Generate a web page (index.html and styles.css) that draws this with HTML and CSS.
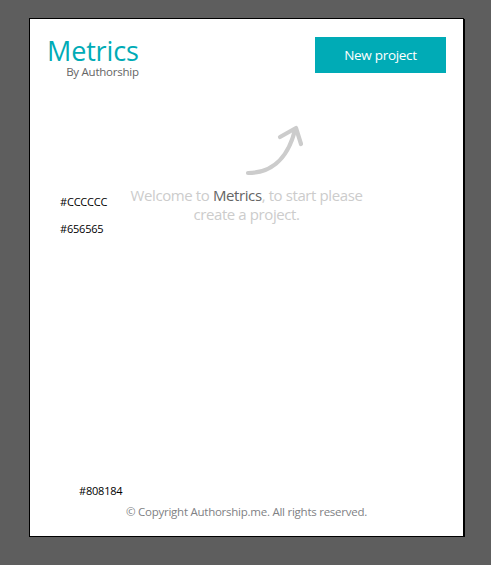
FILE: index.html
```html
<!DOCTYPE html>
<html lang="en">
<head>
<meta charset="utf-8">
<title>Metrics</title>
<link rel="stylesheet" href="styles.css">
</head>
<body>
<div class="card">
  <header class="header">
    <div class="logo">
      <span class="logo-title">Metrics</span>
      <span class="logo-sub">By Authorship</span>
    </div>
    <button class="btn-new" type="button">New project</button>
  </header>

  <main class="welcome">
    <svg class="arrow" width="60" height="56" viewBox="0 0 60 56" aria-hidden="true">
      <path d="M3 50 C23 50 42 39 50 7" fill="none" stroke="#cccccc" stroke-width="4.2" stroke-linecap="round"/>
      <path d="M35 14 L51 5 L56 21" fill="none" stroke="#cccccc" stroke-width="4.2" stroke-linecap="round" stroke-linejoin="round"/>
    </svg>
    <p class="welcome-text">Welcome to <span class="accent">Metrics</span>, to start please<br>create a project.</p>
  </main>

  <footer class="footer">© Copyright Authorship.me. All rights reserved.</footer>

  <span class="note note-ccc">#CCCCCC</span>
  <span class="note note-656">#656565</span>
  <span class="note note-808">#808184</span>
</div>
</body>
</html>
```

FILE: styles.css
```css
html, body {
  margin: 0;
  padding: 0;
}

body {
  background: #5e5e5e;
  padding: 18px 0 0 29px;
  font-family: "Open Sans", "Noto Sans", sans-serif;
}

.card {
  position: relative;
  box-sizing: border-box;
  width: 435px;
  height: 519px;
  background: #ffffff;
  border: 1px solid #000000;
  box-shadow: 1px 1px 0 #000000;
  display: flex;
  flex-direction: column;
  padding: 18px 17px 0 17px;
}

.header {
  display: flex;
  justify-content: space-between;
  align-items: flex-start;
}

.logo {
  display: inline-flex;
  flex-direction: column;
  align-items: flex-end;
  margin-top: -1px;
}

.logo-title {
  color: #00abb6;
  font-size: 27px;
  line-height: 29px;
  letter-spacing: -0.15px;
}

.logo-sub {
  color: #656565;
  font-size: 11.5px;
  line-height: 14px;
  letter-spacing: -0.25px;
  margin-top: 0;
}

.btn-new {
  width: 131px;
  height: 36px;
  border: 0;
  background: #00abb6;
  color: #ffffff;
  font-family: inherit;
  font-size: 13.5px;
  letter-spacing: -0.3px;
  padding: 0;
  cursor: pointer;
}

.welcome {
  display: flex;
  flex-direction: column;
  align-items: center;
  margin-top: 44px;
}

.arrow {
  display: block;
  margin-left: 57px;
}

.welcome-text {
  margin: 7px 0 0 0;
  color: #cccccc;
  font-size: 15px;
  line-height: 19px;
  letter-spacing: -0.4px;
  text-align: center;
}

.accent {
  color: #656565;
}

.footer {
  margin-top: auto;
  margin-bottom: 17px;
  color: #808184;
  font-size: 11.5px;
  line-height: 14px;
  letter-spacing: -0.25px;
  text-align: center;
}

.note {
  position: absolute;
  color: #000000;
  font-size: 11px;
  line-height: 12px;
  letter-spacing: -0.2px;
}

.note-ccc { left: 30px; top: 177px; }
.note-656 { left: 30px; top: 204px; }
.note-808 { left: 49px; top: 466px; }
```
